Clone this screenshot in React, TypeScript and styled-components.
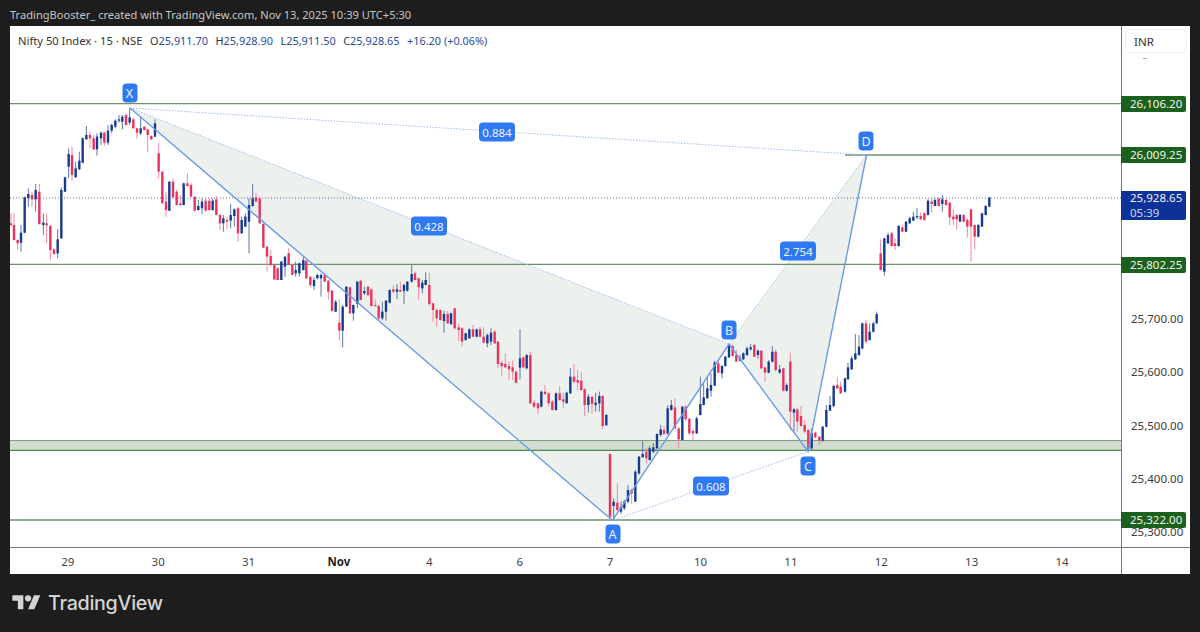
import React from 'react';
import styled, { createGlobalStyle } from 'styled-components';

const GlobalStyle = createGlobalStyle`
  html, body { margin: 0; padding: 0; background: #1d1d1d; overflow: hidden; }
`;

const uiFont = `"Noto Sans", "Open Sans", "Liberation Sans", sans-serif`;

const Page = styled.div`
  width: 1200px;
  height: 632px;
  box-sizing: border-box;
  padding: 0 10px;
  background: #1d1d1d;
  font-family: ${uiFont};
`;

const TopBar = styled.div`
  height: 26px;
  display: flex;
  align-items: center;
  padding-top: 3px;
  box-sizing: border-box;
  color: #c6c6c6;
  font-size: 11.1px;
  white-space: nowrap;
`;

const ChartFrame = styled.div`
  display: grid;
  grid-template-columns: 1112px 68px;
  grid-template-rows: 522px 26px;
  background: #fff;
`;

const Plot = styled.div`
  position: relative;
  border-right: 1.5px solid #777;
  border-bottom: 1.5px solid #777;
  overflow: hidden;
`;

const PriceAxis = styled.div`
  position: relative;
  border-bottom: 1.5px solid #777;
  overflow: visible;
`;

const CurrencyBox = styled.div`
  position: absolute;
  left: 3px;
  top: 3px;
  width: 61px;
  height: 24px;
  box-sizing: border-box;
  border: 1px solid #f1f1f1;
  border-radius: 4px;
  padding-left: 8px;
  line-height: 24px;
  font-size: 11.5px;
  color: #333;
`;

const Tick = styled.span`
  position: absolute;
  left: 21px;
  top: 32px;
  width: 4px;
  height: 1px;
  background: #aaa;
`;

const PriceText = styled.span`
  position: absolute;
  left: 9px;
  transform: translateY(-50%);
  font-size: 11.5px;
  color: #3a3a3a;
`;

const PriceTag = styled.div<{ $tone: 'green' | 'blue' }>`
  position: absolute;
  left: -1px;
  width: 65px;
  box-sizing: border-box;
  padding: 0 0 0 9px;
  border-radius: 0 2px 2px 0;
  background: ${(p) => (p.$tone === 'green' ? '#1b611d' : '#0c3198')};
  color: #f0f4f0;
  font-size: 11.5px;
  line-height: ${(p) => (p.$tone === 'green' ? '16px' : '14.5px')};
`;

const Countdown = styled.span`
  color: #cdd8f2;
`;

const TimeAxis = styled.div`
  display: grid;
  grid-template-columns: repeat(12, 90.4px);
  padding-left: 12.6px;
  border-right: 1.5px solid #777;
  align-items: center;
`;

const AxisCorner = styled.div`
  background: #fff;
`;

const TimeLabel = styled.span<{ $strong?: boolean }>`
  text-align: center;
  font-size: 11.5px;
  color: ${(p) => (p.$strong ? '#1f1f1f' : '#444')};
  font-weight: ${(p) => (p.$strong ? 700 : 400)};
`;

const Legend = styled.div`
  position: absolute;
  left: 8px;
  top: 7px;
  display: flex;
  gap: 7.5px;
  font-size: 11.2px;
  line-height: 16px;
  color: #333;
  white-space: nowrap;
`;

const LegendEntry = styled.span`
  font-size: 10.9px;
`;

const LegendValue = styled.span`
  font-size: 10.9px;
  color: #2b4c9b;
`;

const PatternTag = styled.div<{ $wide?: boolean }>`
  position: absolute;
  transform: translate(-50%, -50%);
  width: ${(p) => (p.$wide ? '36px' : '15px')};
  height: 19px;
  border-radius: 4px;
  background: #2f79f2;
  color: #eef4ff;
  font-size: ${(p) => (p.$wide ? '11.5px' : '12.5px')};
  line-height: 19px;
  text-align: center;
`;

const Footer = styled.div`
  height: 58px;
  display: flex;
  align-items: center;
  gap: 7px;
  padding-left: 2px;
`;

const Wordmark = styled.span`
  font-family: Inter, "Noto Sans", sans-serif;
  font-size: 19.7px;
  font-weight: 500;
  letter-spacing: -0.3px;
  color: #d4d4d4;
`;

// traced candles, in 3x crop units: [red?, x, bodyTop, bodyBottom, wickTop, wickBottom]
type Row = [number, number, number, number, number, number];

const traced: { ox: number; oy: number; rows: Row[] }[] = [
  {
    ox: 0,
    oy: 80,
    rows: [
      [1, 33, 430, 435, 400, 440], [1, 42, 435, 480, 400, 482], [1, 53, 480, 490, 478, 510], [0, 63, 458, 488, 435, 515],
      [0, 74, 352, 458, 350, 460], [0, 85, 342, 355, 325, 380], [1, 96, 345, 358, 335, 380], [0, 107, 330, 358, 312, 395],
      [1, 118, 335, 432, 312, 434], [0, 130, 428, 435, 400, 465], [1, 140, 430, 436, 400, 490], [1, 151, 438, 510, 435, 540],
      [1, 162, 508, 522, 505, 525], [0, 173, 478, 520, 448, 535], [0, 184, 330, 475, 322, 477], [0, 195, 292, 335, 290, 336],
      [0, 206, 222, 260, 205, 295], [1, 216, 225, 285, 200, 303], [0, 227, 265, 292, 245, 293], [0, 238, 242, 268, 215, 269],
      [0, 248, 175, 248, 172, 250], [0, 259, 165, 178, 138, 179], [1, 270, 165, 175, 155, 205], [1, 281, 175, 208, 165, 210],
      [0, 291, 170, 208, 160, 227], [0, 303, 158, 175, 155, 195], [1, 313, 158, 188, 155, 198], [0, 324, 152, 188, 135, 195],
      [0, 335, 135, 152, 130, 160], [0, 346, 122, 140, 118, 145], [0, 357, 118, 122, 105, 128], [0, 367, 110, 125, 105, 148],
      [1, 378, 105, 135, 100, 136], [0, 389, 112, 128, 85, 135], [1, 400, 118, 145, 112, 146], [1, 411, 145, 158, 143, 175],
      [0, 422, 145, 160, 110, 165], [1, 433, 140, 150, 138, 152], [1, 443, 148, 165, 146, 215], [1, 454, 168, 178, 165, 180],
      [0, 465, 130, 170, 118, 171], [1, 476, 220, 275, 190, 295], [1, 487, 275, 370, 273, 371], [1, 498, 365, 390, 335, 410],
      [0, 508, 305, 392, 303, 393], [1, 519, 305, 352, 295, 353], [1, 530, 335, 375, 330, 376], [1, 541, 370, 375, 345, 378],
      [0, 551, 310, 375, 308, 376], [1, 562, 310, 318, 280, 320], [1, 573, 315, 350, 310, 351], [1, 584, 350, 392, 348, 395],
      [0, 595, 378, 390, 360, 392], [0, 606, 365, 385, 355, 403], [1, 617, 362, 392, 355, 395], [1, 628, 362, 390, 355, 392],
      [0, 638, 362, 390, 355, 392], [1, 649, 358, 405, 348, 406], [1, 660, 405, 430, 400, 450], [0, 670, 415, 430, 405, 455],
      [1, 681, 420, 425, 410, 447], [0, 692, 405, 422, 372, 445], [0, 703, 388, 408, 385, 440], [1, 714, 385, 460, 380, 485],
      [0, 725, 420, 460, 410, 461], [0, 736, 410, 440, 400, 441], [0, 747, 375, 425, 355, 520], [0, 758, 355, 378, 312, 380],
      [1, 768, 352, 365, 338, 366], [1, 779, 355, 430, 350, 431], [1, 790, 432, 503, 425, 504], [1, 801, 500, 530, 498, 575],
      [1, 812, 528, 555, 510, 560], [1, 823, 555, 598, 553, 600], [1, 833, 565, 600, 563, 600], [0, 844, 545, 600, 543, 600],
      [0, 855, 530, 560, 528, 590], [1, 866, 520, 555, 505, 556], [1, 877, 555, 585, 553, 586], [0, 887, 570, 580, 545, 590],
      [0, 898, 550, 580, 548, 590],
    ],
  },
  {
    ox: 300,
    oy: 240,
    rows: [
      [0, 10, 60, 90, 50, 92], [1, 19, 62, 115, 60, 118], [1, 31, 110, 135, 108, 140], [0, 42, 120, 138, 112, 150],
      [0, 52, 105, 115, 100, 118], [0, 63, 105, 115, 100, 170], [1, 74, 105, 125, 100, 126], [1, 85, 122, 155, 120, 180],
      [1, 96, 152, 213, 150, 215], [0, 107, 185, 215, 180, 216], [1, 118, 248, 272, 178, 302], [0, 128, 200, 272, 195, 322],
      [0, 139, 140, 200, 138, 201], [1, 150, 142, 220, 140, 222], [0, 160, 195, 220, 193, 242], [0, 172, 125, 192, 123, 205],
      [1, 182, 122, 180, 120, 181], [0, 193, 153, 160, 140, 165], [1, 204, 140, 165, 138, 168], [1, 214, 148, 198, 145, 200],
      [1, 226, 195, 198, 178, 200], [1, 236, 198, 235, 195, 240], [0, 247, 215, 235, 185, 240], [0, 258, 182, 215, 180, 242],
      [0, 269, 150, 188, 148, 190], [1, 280, 148, 155, 135, 160], [0, 291, 148, 155, 132, 178], [1, 301, 150, 155, 125, 156],
      [0, 312, 135, 153, 130, 192], [0, 322, 125, 152, 123, 155], [0, 335, 102, 125, 75, 128], [1, 345, 100, 120, 95, 122],
      [1, 356, 115, 142, 113, 180], [0, 367, 128, 145, 120, 160], [0, 377, 120, 135, 97, 136], [1, 388, 135, 192, 98, 198],
      [1, 399, 190, 210, 188, 245], [1, 410, 210, 235, 205, 260], [1, 421, 210, 240, 208, 242], [0, 432, 222, 243, 212, 278],
      [1, 443, 222, 250, 212, 252], [0, 453, 220, 252, 218, 255], [1, 464, 205, 265, 203, 268], [1, 476, 262, 270, 250, 302],
      [1, 486, 265, 305, 262, 318], [0, 497, 280, 300, 278, 302], [0, 508, 268, 295, 265, 296], [1, 519, 268, 290, 255, 292],
      [0, 530, 268, 290, 266, 292], [1, 540, 268, 290, 260, 292], [1, 551, 290, 308, 262, 310], [0, 562, 285, 310, 280, 322],
      [0, 573, 278, 305, 265, 315], [1, 584, 275, 310, 270, 312], [1, 594, 305, 372, 303, 385], [1, 605, 368, 378, 365, 408],
      [1, 616, 372, 382, 340, 385], [1, 627, 378, 388, 365, 420], [1, 638, 382, 395, 362, 420], [1, 648, 395, 428, 392, 430],
      [0, 660, 355, 383, 268, 418], [1, 670, 352, 382, 350, 385], [0, 680, 345, 385, 342, 388], [1, 691, 345, 490, 335, 491],
      [1, 702, 488, 500, 480, 505], [1, 714, 490, 505, 488, 522], [0, 724, 455, 500, 452, 502], [1, 735, 455, 462, 435, 465],
      [1, 746, 460, 490, 458, 500], [1, 757, 485, 510, 480, 512], [0, 768, 460, 510, 458, 512], [1, 779, 460, 480, 438, 482],
      [1, 790, 478, 485, 458, 505], [0, 800, 458, 490, 455, 491], [0, 811, 410, 460, 385, 462], [1, 822, 410, 425, 372, 430],
      [1, 833, 420, 428, 390, 450], [1, 844, 422, 450, 395, 452], [1, 854, 448, 495, 445, 528], [0, 865, 470, 495, 462, 518],
      [1, 876, 470, 492, 468, 522], [0, 887, 488, 495, 458, 515], [0, 898, 468, 490, 455, 515], [1, 908, 468, 558, 465, 568],
      [0, 919, 525, 556, 522, 557],
    ],
  },
  {
    ox: 590,
    oy: 320,
    rows: [
      [1, 60, 402, 590, 400, 600], [0, 71, 545, 558, 535, 595], [1, 82, 548, 570, 490, 575], [0, 93, 560, 575, 545, 582],
      [0, 103, 545, 565, 540, 570], [0, 114, 510, 545, 495, 550], [1, 125, 510, 520, 505, 552], [0, 136, 455, 545, 450, 546],
      [0, 147, 410, 460, 408, 465], [0, 158, 402, 412, 362, 413], [1, 169, 395, 415, 385, 430], [0, 179, 385, 420, 378, 422],
      [0, 190, 382, 395, 370, 400], [0, 201, 342, 385, 340, 388], [0, 212, 328, 345, 315, 350], [1, 222, 330, 342, 318, 345],
      [0, 233, 265, 340, 255, 345], [0, 244, 255, 270, 240, 272], [1, 255, 262, 325, 235, 328], [1, 266, 325, 358, 322, 385],
      [0, 277, 260, 360, 258, 362], [1, 287, 260, 298, 255, 302], [1, 298, 296, 340, 295, 345], [1, 309, 333, 340, 325, 360],
      [0, 320, 295, 340, 290, 342], [0, 331, 252, 285, 170, 286], [0, 341, 232, 255, 190, 256], [0, 352, 205, 235, 170, 236],
      [0, 363, 195, 212, 160, 230], [0, 374, 128, 197, 122, 198], [1, 385, 130, 158, 122, 159], [0, 396, 138, 160, 135, 175],
      [0, 406, 110, 138, 108, 140], [0, 417, 75, 112, 72, 115], [1, 428, 78, 108, 75, 110], [1, 439, 105, 125, 90, 126],
      [0, 450, 115, 122, 105, 125], [0, 460, 100, 118, 97, 120], [0, 471, 85, 105, 80, 108], [0, 482, 82, 88, 72, 92],
      [1, 493, 75, 110, 72, 111], [0, 504, 92, 105, 88, 115], [1, 514, 92, 145, 90, 148], [1, 525, 142, 158, 140, 185],
      [0, 536, 125, 158, 120, 160], [0, 547, 95, 125, 78, 128], [1, 557, 95, 150, 88, 155], [0, 569, 148, 158, 135, 162],
      [1, 580, 145, 212, 143, 215], [0, 590, 195, 212, 190, 215], [1, 601, 125, 275, 98, 330], [0, 612, 268, 278, 265, 335],
      [1, 622, 268, 305, 262, 335], [1, 633, 288, 318, 258, 320], [1, 644, 315, 335, 300, 340], [1, 655, 330, 388, 328, 392],
      [0, 665, 338, 385, 325, 390], [1, 676, 338, 352, 335, 355], [1, 688, 350, 362, 348, 375], [0, 698, 320, 362, 318, 365],
      [0, 709, 270, 320, 255, 322], [0, 720, 255, 272, 228, 273], [0, 731, 198, 258, 195, 262], [1, 742, 195, 205, 172, 208],
      [1, 752, 200, 220, 185, 222], [0, 765, 175, 215, 173, 218], [0, 774, 142, 178, 128, 179], [0, 785, 115, 148, 108, 150],
      [0, 796, 100, 118, 42, 120], [0, 807, 80, 105, 45, 108], [0, 817, 10, 85, 8, 88], [1, 828, 10, 65, 0, 70],
      [0, 839, 35, 60, 10, 62], [0, 850, 10, 35, 5, 38], [0, 860, -18, 10, -25, 12],
    ],
  },
  {
    ox: 860,
    oy: 130,
    rows: [
      [1, 62, 370, 420, 328, 421], [0, 73, 325, 425, 323, 437], [0, 84, 315, 340, 308, 342], [1, 95, 310, 348, 305, 350],
      [1, 105, 340, 348, 325, 360], [0, 116, 288, 348, 285, 350], [1, 127, 292, 305, 285, 306], [0, 138, 275, 305, 273, 306],
      [0, 149, 265, 280, 260, 282], [0, 160, 260, 272, 245, 273], [0, 171, 258, 262, 235, 268], [1, 182, 258, 268, 248, 270],
      [1, 193, 250, 270, 245, 272], [0, 204, 212, 255, 208, 256], [1, 215, 215, 222, 205, 248], [0, 225, 210, 228, 205, 229],
      [1, 236, 205, 228, 203, 229], [0, 247, 208, 222, 195, 245], [1, 258, 210, 225, 205, 228], [1, 269, 218, 262, 215, 285],
      [1, 280, 260, 268, 238, 285], [1, 290, 255, 268, 252, 298], [0, 300, 255, 275, 252, 276], [1, 311, 255, 275, 252, 278],
      [1, 322, 270, 290, 265, 322], [1, 333, 238, 290, 238, 395], [1, 344, 285, 320, 283, 358], [0, 355, 285, 320, 282, 322],
      [0, 366, 250, 290, 248, 291], [0, 377, 228, 255, 225, 256], [0, 388, 203, 230, 200, 232],
    ],
  },
];

const candles = traced.flatMap(({ ox, oy, rows }) =>
  rows.map(([red, x, t, b, wt, wb]) => ({
    red: red === 1,
    x: ox + x / 3,
    top: oy + t / 3,
    bottom: oy + b / 3,
    high: oy + wt / 3,
    low: oy + wb / 3,
  })),
);

const X = { x: 130, y: 108 };
const A = { x: 612.5, y: 520.5 };
const B = { x: 729, y: 344 };
const C = { x: 808, y: 451.5 };
const D = { x: 866.5, y: 155 };

const levels = [103.6, 264.3, 520];

const Candles = () => (
  <g>
    {candles.map((c, i) => (
      <g key={i}>
        <line
          x1={c.x}
          x2={c.x}
          y1={c.high}
          y2={c.low}
          stroke={c.red ? '#f08aa3' : '#5f76a6'}
          strokeWidth={1}
        />
        <rect
          x={c.x - 1.2}
          y={c.top}
          width={2.4}
          height={Math.max(c.bottom - c.top, 1.2)}
          fill={c.red ? '#e8335f' : '#163a8e'}
        />
      </g>
    ))}
  </g>
);

const ChartDrawing = () => (
  <svg width={1112} height={522} viewBox="10 26 1112 522" style={{ display: 'block' }}>
    <polygon points={`${X.x},${X.y} ${A.x},${A.y} ${B.x},${B.y}`} fill="#edf1ee" />
    <polygon points={`${B.x},${B.y} ${C.x},${C.y} ${D.x},${D.y}`} fill="#edf1ee" />
    <rect x={10} y={440.5} width={1112} height={10} fill="#d2ddd0" />
    <line x1={10} x2={1122} y1={440.5} y2={440.5} stroke="#7fa37f" strokeWidth={1} />
    <line x1={10} x2={1122} y1={450.3} y2={450.3} stroke="#4d8a4f" strokeWidth={1.2} />
    {levels.map((y) => (
      <line key={y} x1={10} x2={1122} y1={y} y2={y} stroke="#6f906f" strokeWidth={1.3} />
    ))}
    <line x1={845} x2={1122} y1={155} y2={155} stroke="#6f906f" strokeWidth={1.3} />
    <line x1={10} x2={1122} y1={198} y2={198} stroke="#33478a" strokeWidth={0.8} strokeDasharray="1 2" />
    <Candles />
    <g stroke="#9dbcf0" strokeWidth={1} strokeDasharray="1.5 1.5" fill="none">
      <line x1={X.x} y1={X.y} x2={D.x} y2={D.y} />
      <line x1={X.x} y1={X.y} x2={B.x} y2={B.y} />
      <line x1={A.x} y1={A.y} x2={C.x} y2={C.y} />
      <line x1={B.x} y1={B.y} x2={D.x} y2={D.y} />
    </g>
    <polyline
      points={`${X.x},${X.y} ${A.x},${A.y} ${B.x},${B.y} ${C.x},${C.y} ${D.x},${D.y}`}
      fill="none"
      stroke="#6c9be6"
      strokeWidth={1.4}
    />
  </svg>
);

const patternTags = [
  { text: 'X', x: 129.5, y: 93 },
  { text: 'A', x: 612.5, y: 534 },
  { text: 'B', x: 729, y: 330 },
  { text: 'C', x: 808, y: 466 },
  { text: 'D', x: 866, y: 141 },
  { text: '0.884', x: 497, y: 132, wide: true },
  { text: '0.428', x: 429, y: 226, wide: true },
  { text: '2.754', x: 798, y: 251, wide: true },
  { text: '0.608', x: 711, y: 486, wide: true },
];

const axisPrices = [
  { text: '25,700.00', y: 318 },
  { text: '25,600.00', y: 371 },
  { text: '25,500.00', y: 424.5 },
  { text: '25,400.00', y: 477.5 },
  { text: '25,300.00', y: 531 },
];

const priceTags = [
  { text: '26,106.20', y: 104 },
  { text: '26,009.25', y: 155 },
  { text: '25,802.25', y: 265 },
  { text: '25,322.00', y: 520 },
];

const days = ['29', '30', '31', 'Nov', '4', '6', '7', '10', '11', '12', '13', '14'];

const TradingViewLogo = () => (
  <svg width={29} height={22} viewBox="0 0 36 28" fill="#d4d4d4">
    <path d="M14 22H7V11H0V4h14v18zM28 22h-8l7.5-18h8L28 22z" />
    <circle cx={20} cy={8} r={4} />
  </svg>
);

const PLOT_TOP = 26;

const App = () => {
  return (
    <Page>
      <GlobalStyle />
      <TopBar>TradingBooster_ created with TradingView.com, Nov 13, 2025 10:39 UTC+5:30</TopBar>
      <ChartFrame>
        <Plot>
          <ChartDrawing />
          <Legend>
            <span>Nifty 50 Index · 15 · NSE</span>
            <LegendEntry>O<LegendValue>25,911.70</LegendValue></LegendEntry>
            <LegendEntry>H<LegendValue>25,928.90</LegendValue></LegendEntry>
            <LegendEntry>L<LegendValue>25,911.50</LegendValue></LegendEntry>
            <LegendEntry>C<LegendValue>25,928.65</LegendValue></LegendEntry>
            <LegendValue>+16.20 (+0.06%)</LegendValue>
          </Legend>
          {patternTags.map((t) => (
            <PatternTag
              key={t.text}
              $wide={t.wide}
              style={{ left: t.x - 10, top: t.y - PLOT_TOP }}
            >
              {t.text}
            </PatternTag>
          ))}
        </Plot>
        <PriceAxis>
          <CurrencyBox>INR</CurrencyBox>
          <Tick />
          {axisPrices.map((p) => (
            <PriceText key={p.text} style={{ top: p.y - PLOT_TOP }}>{p.text}</PriceText>
          ))}
          {priceTags.map((p) => (
            <PriceTag key={p.text} $tone="green" style={{ top: p.y - PLOT_TOP - 8 }}>
              {p.text}
            </PriceTag>
          ))}
          <PriceTag $tone="blue" style={{ top: 191 - PLOT_TOP }}>
            25,928.65
            <br />
            <Countdown>05:39</Countdown>
          </PriceTag>
        </PriceAxis>
        <TimeAxis>
          {days.map((d) => (
            <TimeLabel key={d} $strong={d === 'Nov'}>{d}</TimeLabel>
          ))}
        </TimeAxis>
        <AxisCorner />
      </ChartFrame>
      <Footer>
        <TradingViewLogo />
        <Wordmark>TradingView</Wordmark>
      </Footer>
    </Page>
  );
};

export default App;
